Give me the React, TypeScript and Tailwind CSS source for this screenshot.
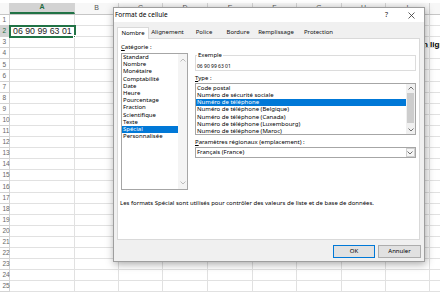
import React from 'react';

const colW = [65, 44, 44, 45, 45, 44, 45, 44, 44, 44];
const letters = 'ABCDEFGHIJ'.split('');
const rows = Array.from({ length: 25 }, (_, i) => i + 1);

const categories = [
  'Standard',
  'Nombre',
  'Monétaire',
  'Comptabilité',
  'Date',
  'Heure',
  'Pourcentage',
  'Fraction',
  'Scientifique',
  'Texte',
  'Spécial',
  'Personnalisée',
];

const types = [
  'Code postal',
  'Numéro de sécurité sociale',
  'Numéro de téléphone',
  'Numéro de téléphone (Belgique)',
  'Numéro de téléphone (Canada)',
  'Numéro de téléphone (Luxembourg)',
  'Numéro de téléphone (Maroc)',
];

const tabs = [
  { label: 'Nombre', w: 'w-[32px]' },
  { label: 'Alignement', w: 'w-[37px]' },
  { label: 'Police', w: 'w-[36px]' },
  { label: 'Bordure', w: 'w-[32px]' },
  { label: 'Remplissage', w: 'w-[44px]' },
  { label: 'Protection', w: 'w-[41px]' },
];

function Chevron({ up, color = '#606060' }: { up?: boolean; color?: string }) {
  return (
    <svg width="6" height="4" viewBox="0 0 6 4" fill="none">
      <path d={up ? 'M0.5 3.5 L3 1 L5.5 3.5' : 'M0.5 0.5 L3 3 L5.5 0.5'} stroke={color} strokeWidth="0.9" />
    </svg>
  );
}

function Sheet() {
  return (
    <div className="flex flex-col font-['Liberation_Sans',sans-serif]">
      <div className="h-[3px] bg-white" />
      <div className="flex h-[12px] border-b border-[#c6c6c6] bg-[#f7f7f7]">
        <div className="w-[10px] shrink-0 border-r border-[#d4d4d4]" />
        {colW.map((w, i) => (
          <div
            key={letters[i]}
            style={{ width: w }}
            className={`shrink-0 flex items-center justify-center text-[7px] border-r border-[#d4d4d4] ${
              i === 0 ? 'bg-[#d3d3d3] text-[#1e6b41] border-b-2 border-b-[#217346] font-bold' : 'text-[#555]'
            }`}
          >
            {letters[i]}
          </div>
        ))}
      </div>
      {rows.map((r) => (
        <div key={r} className="flex h-[11.1px]">
          <div
            className={`w-[10px] shrink-0 pl-[2.5px] flex items-center text-[6.5px] border-r border-b border-[#d4d4d4] ${
              r === 2 ? 'bg-[#d3d3d3] text-[#1e6b41]' : 'bg-white text-[#666]'
            }`}
          >
            {r}
          </div>
          {colW.map((w, i) => (
            <div
              key={i}
              style={{ width: w }}
              className={`shrink-0 border-r border-b border-[#e1e1e1] bg-white ${
                r === 2 && i === 0 ? 'relative outline-2 outline-[#217346] -outline-offset-1 z-10' : ''
              } ${r === 3 && i === 8 ? 'relative' : ''}`}
            >
              {r === 2 && i === 0 && (
                <>
                  <span className="block pl-[3px] text-[8.8px] leading-[11px] text-[#222] whitespace-nowrap">
                    06 90 99 63 01
                  </span>
                  <span className="absolute right-[-2px] bottom-[-2px] w-[3px] h-[3px] bg-[#217346] border border-white" />
                </>
              )}
              {r === 3 && i === 8 && (
                <span className="block pl-[37px] pt-[3px] text-[8px] leading-[9px] font-bold text-black whitespace-nowrap">
                  n ligne
                </span>
              )}
            </div>
          ))}
        </div>
      ))}
    </div>
  );
}

function Dialog() {
  return (
    <div className="absolute left-[113px] top-[7px] w-[312px] h-[255px] border border-[#9e9e9e] bg-[#f0f0f0] shadow-[1px_2px_8px_rgba(0,0,0,0.35)] flex flex-col font-['Noto_Sans',sans-serif] text-[6px] text-black z-20">
      <div className="h-[14px] bg-white flex items-center">
        <span className="flex-1 pl-[1px] text-[6.5px] leading-[8px]">Format de cellule</span>
        <span className="w-[25px] text-center text-[7px] leading-[8px] text-[#222]">?</span>
        <span className="w-[25px] flex items-center justify-center">
          <svg width="7" height="7" viewBox="0 0 7 7">
            <path d="M0.5 0.5 L6.5 6.5 M6.5 0.5 L0.5 6.5" stroke="#333" strokeWidth="0.8" />
          </svg>
        </span>
      </div>

      <div className="h-[16px] flex items-end pl-[3px]">
        {tabs.map((t, i) => (
          <div
            key={t.label}
            className={`${t.w} flex items-center justify-center leading-[7px] ${
              i === 0
                ? 'h-[12px] bg-white border border-b-0 border-[#d9d9d9] relative z-10 -mb-[1px]'
                : 'h-[11px] text-[#111]'
            }`}
          >
            {t.label}
          </div>
        ))}
      </div>

      <div className="ml-[3px] w-[303px] h-[202px] bg-white border border-[#d9d9d9] flex flex-col">
        <div className="flex pl-[3px]">
          <div className="w-[67px] shrink-0 pt-[5px]">
            <div className="leading-[7px]">
              <span className="underline">C</span>atégorie :
            </div>
            <div className="mt-[2px] h-[137px] border border-[#a6a6a6] flex">
              <div className="flex-1 flex flex-col">
                {categories.map((c) => (
                  <div
                    key={c}
                    className={`h-[7.2px] leading-[7.2px] pl-[1px] whitespace-nowrap ${
                      c === 'Spécial' ? 'bg-[#0078d7] text-white' : ''
                    }`}
                  >
                    {c}
                  </div>
                ))}
              </div>
              <div className="w-[9px] bg-[#f4f4f4] flex flex-col items-center justify-between py-[4px]">
                <Chevron up color="#b5b5b5" />
                <Chevron color="#b5b5b5" />
              </div>
            </div>
          </div>

          <div className="ml-[7px] w-[221px] pt-[13px]">
            <fieldset className="border border-[#dcdcdc] px-[1px]">
              <legend className="px-[1px] leading-[6px]">Exemple</legend>
              <div className="pt-[5px] pb-[1px] leading-[6px] text-[5px]">06 90 99 63 01</div>
            </fieldset>

            <div className="mt-[4px] leading-[7px]">
              <span className="underline">T</span>ype :
            </div>
            <div className="mt-[1px] h-[52px] border border-[#a6a6a6] flex">
              <div className="flex-1 pt-[0.5px] flex flex-col">
                {types.map((t) => (
                  <div
                    key={t}
                    className={`h-[7.3px] leading-[7.3px] pl-[1px] whitespace-nowrap ${
                      t === 'Numéro de téléphone' ? 'bg-[#0078d7] text-white' : ''
                    }`}
                  >
                    {t}
                  </div>
                ))}
              </div>
              <div className="w-[9px] bg-[#f0f0f0] flex flex-col items-center">
                <div className="h-[8px] flex items-center">
                  <Chevron up />
                </div>
                <div className="mt-[1px] w-[7px] h-[30px] bg-[#cdcdcd]" />
                <div className="flex-1" />
                <div className="h-[8px] flex items-center">
                  <Chevron />
                </div>
              </div>
            </div>

            <div className="mt-[4px] leading-[7px]">
              <span className="underline">P</span>aramètres régionaux (emplacement) :
            </div>
            <div className="mt-[1px] h-[11px] border border-[#a6a6a6] flex items-center">
              <span className="flex-1 pl-[1px] leading-[7px]">Français (France)</span>
              <span className="w-[9px] h-[9px] mr-[0.5px] border border-[#d0d0d0] bg-[#f6f6f6] flex items-center justify-center">
                <Chevron />
              </span>
            </div>
          </div>
        </div>

        <div className="mt-[10px] pl-[2px] leading-[7px] whitespace-nowrap">
          Les formats Spécial sont utilisés pour contrôler des valeurs de liste et de base de données.
        </div>
      </div>

      <div className="flex-1 flex justify-end items-start pt-[5px] pr-[3px] gap-[3px]">
        <button className="w-[42px] h-[13px] border border-[#0078d7] bg-[#e1e1e1] leading-[7px]">OK</button>
        <button className="w-[43px] h-[13px] border border-[#adadad] bg-[#e1e1e1] leading-[7px]">Annuler</button>
      </div>
    </div>
  );
}

export default function App() {
  return (
    <div className="relative w-[440px] h-[292px] overflow-hidden bg-white">
      <Sheet />
      <Dialog />
    </div>
  );
}
